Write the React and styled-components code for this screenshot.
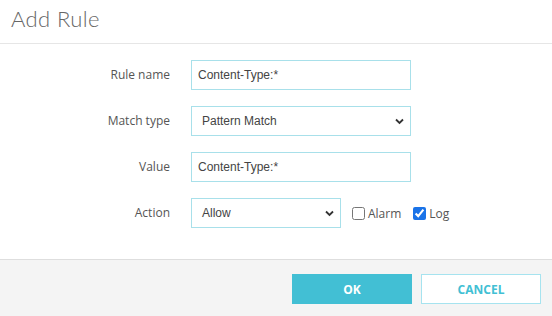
import React, { useState } from "react";
import styled, { createGlobalStyle } from "styled-components";

const GlobalStyle = createGlobalStyle`
  html, body {
    margin: 0;
    padding: 0;
    background: #fff;
  }
  * { box-sizing: border-box; }
`;

const Dialog = styled.div`
  width: 552px;
  height: 316px;
  display: flex;
  flex-direction: column;
  background: #fff;
  font-family: "Open Sans", "Noto Sans", sans-serif;
`;

const Header = styled.div`
  height: 44px;
  border-bottom: 1px solid #e6e6e6;
  padding: 4px 0 0 11px;
`;

const Title = styled.h2`
  margin: 0;
  font-family: Lato, "Open Sans", sans-serif;
  font-weight: 300;
  font-size: 22px;
  line-height: 30px;
  color: #666;
  letter-spacing: 0.4px;
`;

const Body = styled.div`
  flex: 1;
  padding: 16px 0 0 0;
`;

const Form = styled.div`
  display: grid;
  grid-template-columns: 170px auto;
  column-gap: 21px;
  row-gap: 16px;
  align-items: center;
`;

const Label = styled.label`
  text-align: right;
  font-size: 12px;
  color: #555;
  margin-top: -2px;
`;

const Field = styled.div`
  display: flex;
  align-items: center;
`;

const TextInput = styled.input`
  width: 220px;
  height: 30px;
  border: 1px solid #a8e0ea;
  padding: 0 6px;
  font-family: "Liberation Sans", Arial, sans-serif;
  font-size: 12px;
  color: #444;
  outline: none;
`;

const SelectBox = styled.div`
  position: relative;
  width: ${(p) => p.$w}px;
  height: 30px;
  border: 1px solid #a8e0ea;
  display: flex;
  align-items: center;
  padding-left: 10px;
  font-family: "Liberation Sans", Arial, sans-serif;
  font-size: 12px;
  color: #444;
`;

const Chevron = styled.svg`
  position: absolute;
  right: 6px;
  top: 11px;
`;

const Check = styled.label`
  display: flex;
  align-items: center;
  font-size: 12px;
  color: #555;
  margin-left: ${(p) => p.$ml}px;
  input {
    margin: 0 3px 0 0;
    width: 13px;
    height: 13px;
    accent-color: #1a73e8;
  }
`;

const Footer = styled.div`
  height: 57px;
  border-top: 1px solid #dedede;
  background: #f4f4f4;
  display: flex;
  justify-content: flex-end;
  align-items: flex-start;
  gap: 9px;
  padding: 14px 11px 0 0;
`;

const Button = styled.button`
  width: 120px;
  height: 30px;
  font-family: "Open Sans", sans-serif;
  font-weight: 700;
  font-size: 12px;
  cursor: pointer;
  background: ${(p) => (p.$primary ? "#42bfd4" : "#fff")};
  color: ${(p) => (p.$primary ? "#fff" : "#42bfd4")};
  border: 1px solid ${(p) => (p.$primary ? "#42bfd4" : "#a6e3ef")};
`;

function Select({ value, width }) {
  return (
    <SelectBox $w={width}>
      {value}
      <Chevron width="9" height="7" viewBox="0 0 9 7">
        <path d="M1 1.5 L4.5 5 L8 1.5" fill="none" stroke="#333" strokeWidth="1.8" />
      </Chevron>
    </SelectBox>
  );
}

export default function App() {
  const [alarm, setAlarm] = useState(false);
  const [log, setLog] = useState(true);
  return (
    <>
      <GlobalStyle />
      <Dialog>
        <Header>
          <Title>Add Rule</Title>
        </Header>
        <Body>
          <Form>
            <Label>Rule name</Label>
            <Field>
              <TextInput defaultValue="Content-Type:*" />
            </Field>
            <Label>Match type</Label>
            <Field>
              <Select value="Pattern Match" width={220} />
            </Field>
            <Label>Value</Label>
            <Field>
              <TextInput defaultValue="Content-Type:*" />
            </Field>
            <Label>Action</Label>
            <Field>
              <Select value="Allow" width={150} />
              <Check $ml={11}>
                <input type="checkbox" checked={alarm} onChange={() => setAlarm(!alarm)} />
                Alarm
              </Check>
              <Check $ml={12}>
                <input type="checkbox" checked={log} onChange={() => setLog(!log)} />
                Log
              </Check>
            </Field>
          </Form>
        </Body>
        <Footer>
          <Button $primary>OK</Button>
          <Button>CANCEL</Button>
        </Footer>
      </Dialog>
    </>
  );
}
